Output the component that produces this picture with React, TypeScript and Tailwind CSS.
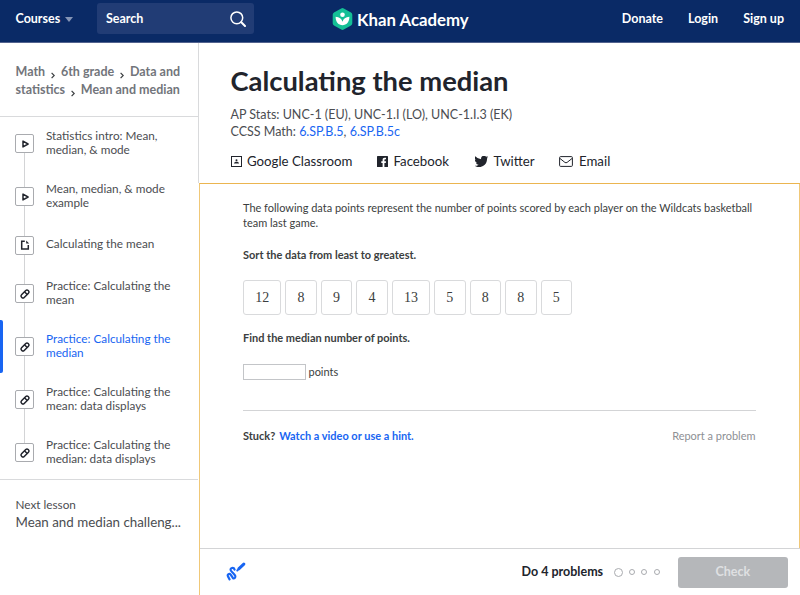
import React from 'react';

type LessonKind = 'video' | 'article' | 'exercise';

interface Lesson {
  kind: LessonKind;
  lines: string[];
  active?: boolean;
}

const lessons: Lesson[] = [
  { kind: 'video', lines: ['Statistics intro: Mean,', 'median, & mode'] },
  { kind: 'video', lines: ['Mean, median, & mode', 'example'] },
  { kind: 'article', lines: ['Calculating the mean'] },
  { kind: 'exercise', lines: ['Practice: Calculating the', 'mean'] },
  { kind: 'exercise', lines: ['Practice: Calculating the', 'median'], active: true },
  { kind: 'exercise', lines: ['Practice: Calculating the', 'mean: data displays'] },
  { kind: 'exercise', lines: ['Practice: Calculating the', 'median: data displays'] },
];

const cards = [12, 8, 9, 4, 13, 5, 8, 8, 5];

const LessonIcon: React.FC<{ kind: LessonKind }> = ({ kind }) => (
  <svg width="12" height="12" viewBox="0 0 12 12" fill="none" stroke="#21242c" strokeWidth="1.5">
    {kind === 'video' && <path d="M4 3.100v5.800L9.100 6z" strokeLinejoin="round" />}
    {kind === 'article' && (
      <>
        <path d="M5.800 2.200H2.700v7.900h6.600V6" />
        <path d="M7.200 1.600v3h3z" fill="#21242c" stroke="none" />
      </>
    )}
    {kind === 'exercise' && (
      <g transform="rotate(-45 6 6)">
        <rect x="1.300" y="4.100" width="9.400" height="3.800" rx="1.700" />
        <path d="M7.200 4v4" />
      </g>
    )}
  </svg>
);

const Header = () => (
  <header className="flex h-[43px] shrink-0 border-b border-[#53638f] bg-[#0a2a66] text-[12.5px] font-bold text-white">
    <div className="flex w-[332px] items-start">
      <button className="ml-[15.5px] mt-[10px] flex w-[81.5px] items-center gap-[5px] leading-[18px]">
        Courses
        <svg width="8" height="5" viewBox="0 0 8 5" fill="#8595b6"><path d="M0 0h8L4 5z" /></svg>
      </button>
      <div className="mt-[3px] flex h-[31px] w-[157px] items-center justify-between rounded-[3px] bg-[#213c75] pl-[9px] pr-[8px]">
        <span className="pt-px">Search</span>
        <svg width="16" height="16" viewBox="0 0 16 16" fill="none" stroke="#fff" strokeWidth="1.5" strokeLinecap="round">
          <circle cx="6.800" cy="6.800" r="5.900" />
          <path d="M11.300 11.300 15 15" strokeWidth="2" />
        </svg>
      </div>
    </div>
    <div className="mt-[7px] flex h-[24px] items-center gap-[4px]">
      <svg width="21" height="22" viewBox="0 0 21 22">
        <path d="M9.200.5a2.600 2.600 0 0 1 2.600 0l7.200 4.100a2.600 2.600 0 0 1 1.300 2.300v8.200a2.600 2.600 0 0 1-1.300 2.300l-7.200 4.100a2.600 2.600 0 0 1-2.600 0L2 17.400A2.600 2.600 0 0 1 .7 15.100V6.900A2.600 2.600 0 0 1 2 4.600z" fill="#14bf96" />
        <circle cx="10.500" cy="6.800" r="2.300" fill="#fff" />
        <path d="M3.600 8.800c3.800 0 6.100 2.200 6.900 5 .8-2.800 3.100-5 6.900-5 0 5.300-2.900 8.400-6.900 8.400s-6.900-3.100-6.900-8.400z" fill="#fff" />
      </svg>
      <span className="whitespace-nowrap pt-px text-[16.800px]">Khan Academy</span>
    </div>
    <nav className="ml-auto mr-[16px] mt-[10px] flex gap-[25px] leading-[18px]">
      <span>Donate</span>
      <span>Login</span>
      <span>Sign up</span>
    </nav>
  </header>
);

const Chevron = () => (
  <svg className="mx-[5.9px] inline-block align-[-3px]" width="4" height="7" viewBox="0 0 4 7" fill="none" stroke="#3b3e40" strokeWidth="1.2">
    <path d="M.6.800 3.200 3.500.6 6.200" />
  </svg>
);

const Sidebar = () => (
  <aside className="flex w-[198px] shrink-0 flex-col">
    <div className="h-[74px] border-b border-[#d9dadc] pl-[15.5px] pt-[20px] text-[12.5px] font-bold leading-[18px] text-[#72757b]">
      <div className="whitespace-nowrap">Math<Chevron />6th grade<Chevron />Data and</div>
      <div className="whitespace-nowrap">statistics<Chevron />Mean and median</div>
    </div>
    <ul className="border-b border-[#d9dadc]">
      {lessons.map((lesson, i) => (
        <li key={i} className={`flex ${lesson.lines.length > 1 ? 'h-[53px]' : 'h-[44px]'}`}>
          <div className={`w-[3px] rounded-r-[2px] ${lesson.active ? 'bg-[#1865f2]' : ''}`} />
          <div className="ml-[12px] flex w-[19px] flex-col items-center">
            <div className={`w-px flex-1 ${i > 0 ? 'bg-[#d3d4d6]' : ''}`} />
            <div className="flex h-[19px] w-[19px] items-center justify-center rounded-[2px] border border-[#a9abaf] bg-white">
              <LessonIcon kind={lesson.kind} />
            </div>
            <div className={`w-px flex-1 ${i < lessons.length - 1 ? 'bg-[#d3d4d6]' : ''}`} />
          </div>
          <div className={`ml-[12px] flex flex-col justify-center whitespace-nowrap pb-[2px] text-[11.75px] leading-[14px] ${lesson.active ? 'text-[#1865f2]' : 'text-[#4b4d51]'}`}>
            {lesson.lines.map(line => <span key={line}>{line}</span>)}
          </div>
        </li>
      ))}
    </ul>
    <div className="pl-[15.5px] pt-[16px] text-[#4b4d51]">
      <div className="text-[11.75px] leading-[17px]">Next lesson</div>
      <div className="whitespace-nowrap text-[13.35px] leading-[18px]">Mean and median challeng...</div>
    </div>
  </aside>
);

const ShareLinks = () => (
  <div className="mt-[12px] flex h-[18px] items-center text-[13.25px] leading-[18px] text-[#21242c]">
    <div className="flex w-[146px] items-center gap-[5.5px]">
      <svg width="11" height="11" viewBox="0 0 11 11" fill="none" stroke="#21242c">
        <rect x=".5" y=".5" width="10" height="10" />
        <circle cx="5.500" cy="4.200" r="1" fill="#21242c" stroke="none" />
        <path d="M3 7.500c0-2.400 5-2.400 5 0z" fill="#21242c" stroke="none" />
      </svg>
      Google Classroom
    </div>
    <div className="flex w-[98px] items-center gap-[6px]">
      <svg width="11" height="11" viewBox="0 0 11 11">
        <rect width="11" height="11" rx=".6" fill="#21242c" />
        <path d="M7.400 11V6.900h1.400L9 5.200H7.400V4.100c0-.5.2-.8.800-.8H9V1.800H7.700c-1.400 0-2.100.8-2.100 2.100v1.300H4.300v1.700h1.300V11z" fill="#fff" />
      </svg>
      Facebook
    </div>
    <div className="flex w-[84.5px] items-center gap-[6px]">
      <svg width="13" height="11" viewBox="1 3 22 19" fill="#21242c">
        <path d="M23.600 4.900a9.900 9.900 0 0 1-2.800.8 4.900 4.900 0 0 0 2.100-2.700 9.700 9.700 0 0 1-3.100 1.200 4.900 4.900 0 0 0-8.400 4.500A13.900 13.900 0 0 1 1.300 3.600a4.900 4.900 0 0 0 1.500 6.600 4.900 4.900 0 0 1-2.200-.6 4.900 4.900 0 0 0 3.900 4.900 4.900 4.900 0 0 1-2.200.1 4.900 4.900 0 0 0 4.600 3.400A9.900 9.900 0 0 1 0 20a14 14 0 0 0 21.500-12.500 10 10 0 0 0 2.100-2.600z" />
      </svg>
      Twitter
    </div>
    <div className="flex items-center gap-[6px]">
      <svg width="14" height="11" viewBox="0 0 14 11" fill="none" stroke="#21242c">
        <rect x=".6" y=".6" width="12.800" height="9.800" rx="1" />
        <path d="m1 2.500 4.900 3.900q1.100.8 2.200 0L13 2.500" />
      </svg>
      Email
    </div>
  </div>
);

const Exercise = () => (
  <section className="flex-1 border-r border-[#f0c878] pl-[43px] pr-[43.5px] text-[10.97px] text-[#3b3e40]">
    <p className="pt-[16px] leading-[15px]">
      <span className="block whitespace-nowrap">The following data points represent the number of points scored by each player on the Wildcats basketball</span>
      team last game.
    </p>
    <p className="mt-[17px] font-bold leading-[15px]">Sort the data from least to greatest.</p>
    <div className="mt-[18px] flex gap-[4px] font-['Liberation_Serif',serif] text-[14px]">
      {cards.map((n, i) => (
        <div
          key={i}
          className={`flex h-[35px] items-center justify-center rounded-[3px] border border-[#d9dadc] pb-px ${n > 9 ? 'w-[38.3px]' : 'w-[31.500px]'}`}
        >
          {n}
        </div>
      ))}
    </div>
    <p className="mt-[15px] font-bold leading-[15px]">Find the median number of points.</p>
    <div className="mt-[18px] flex h-[17px] items-center gap-[3px]">
      <input className="h-[16px] w-[62.5px] border border-[#c3c5c8]" />
      <span className="pt-px">points</span>
    </div>
    <div className="mt-[30px] flex justify-between border-t border-[#d3d4d6] pt-[17px] leading-[15px]">
      <div className="font-bold">
        Stuck?<span className="ml-[4px] text-[#1865f2]">Watch a video or use a hint.</span>
      </div>
      <span className="text-[#8e9094]">Report a problem</span>
    </div>
  </section>
);

const Footer = () => (
  <footer className="flex h-[47px] shrink-0 items-center border-t border-[#d3d4d6] pl-[26px] pr-[12.5px]">
    <svg width="20" height="20" viewBox="0 0 20 20" fill="none" stroke="#1865f2" strokeLinecap="round">
      <path d="M8.600 7.600C7.800 5 3.600 5.600 4.800 8.400c.8 1.700 3.600 3.600 4.400 5.300 1 2.400-1.300 3.500-2.500 2l-1.900-2.900c-1.400-1.900-4-.5-2.800 1.600l1.600 3" strokeWidth="2.200" />
      <path d="m13 6.700 4.800-4.600" strokeWidth="3" />
      <path d="m11.300 8.500.6-.6" strokeWidth="2" />
    </svg>
    <span className="ml-auto text-[12.5px] font-bold text-[#21242c]">Do 4 problems</span>
    <div className="ml-[10.5px] flex items-center gap-[6.3px]">
      <span className="h-[9px] w-[9px] rounded-full border border-[#a9abaf]" />
      <span className="h-[6px] w-[6px] rounded-full border border-[#a9abaf]" />
      <span className="h-[6px] w-[6px] rounded-full border border-[#a9abaf]" />
      <span className="h-[6px] w-[6px] rounded-full border border-[#a9abaf]" />
    </div>
    <button className="ml-[18.5px] h-[31px] w-[109.5px] rounded-[3px] bg-[#b5b7ba] text-[12.5px] font-bold text-[#dfe0e2]">Check</button>
  </footer>
);

const App: React.FC = () => (
  <div className="flex h-[595px] w-[800px] flex-col overflow-hidden bg-white font-['Lato',sans-serif]">
    <Header />
    <div className="flex min-h-0 flex-1">
      <Sidebar />
      <main className="flex min-w-0 flex-1 flex-col">
        <div className="h-[140px] shrink-0 border-l border-[#d9dadc] pl-[31.5px] pt-[20px]">
          <h1 className="text-[27.35px] font-bold leading-[36px] text-[#21242c]">Calculating the median</h1>
          <div className="mt-[7px] text-[12.5px] leading-[17px] text-[#4b4d51]">
            <p>AP Stats: UNC-1 (EU), UNC-1.I (LO), UNC-1.I.3 (EK)</p>
            <p>
              CCSS Math: <a className="text-[#1865f2]">6.SP.B.5</a>, <a className="text-[#1865f2]">6.SP.B.5c</a>
            </p>
          </div>
          <ShareLinks />
        </div>
        <div className="ml-px flex min-h-0 flex-1 flex-col border-l border-t border-l-[#f0c878] border-t-[#ebb550]">
          <Exercise />
          <Footer />
        </div>
      </main>
    </div>
  </div>
);

export default App;
